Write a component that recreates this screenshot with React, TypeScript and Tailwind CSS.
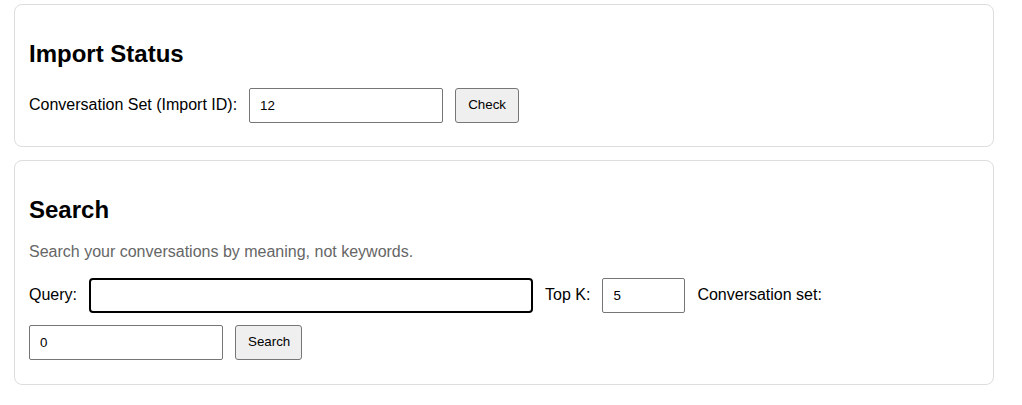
import { useState } from "react";

const font = { fontFamily: '"Liberation Sans", Arial, sans-serif' };

function Card({ children, className = "" }: { children: React.ReactNode; className?: string }) {
  return (
    <section className={`border border-[#dddddd] rounded-[8px] bg-white px-[14px] pt-[15px] ${className}`}>
      {children}
    </section>
  );
}

export default function App() {
  const [importId, setImportId] = useState("12");
  const [query, setQuery] = useState("");
  const [topK, setTopK] = useState("5");
  const [convSet, setConvSet] = useState("0");

  const inputCls =
    "h-[35px] px-[10px] text-[13.33px] text-black bg-white border border-[#767676] rounded-[2px] outline-none";
  const btnCls =
    "h-[35px] px-[12px] text-[13.33px] text-black bg-[#efefef] border border-[#767676] rounded-[3px]";

  return (
    <div className="min-h-screen bg-white text-black pt-[4px] pl-[14px]" style={font}>
      <div className="w-[980px] flex flex-col gap-[13px]">
        <Card className="pb-[23px]">
          <h2 className="text-[24px] font-bold leading-[27.6px] my-[20px]">Import Status</h2>
          <div className="flex flex-wrap items-center gap-3 text-[16px]">
            <label>Conversation Set (Import ID):</label>
            <input
              className={`${inputCls} w-[194px]`}
              value={importId}
              onChange={(e) => setImportId(e.target.value)}
            />
            <button className={`${btnCls} w-[64px]`}>Check</button>
          </div>
        </Card>

        <Card className="pb-[24px]">
          <h2 className="text-[24px] font-bold leading-[27.6px] mt-[20px] mb-[20px]">Search</h2>
          <p className="text-[16px] leading-[18.4px] text-[#666666] mb-[16px]">
            Search your conversations by meaning, not keywords.
          </p>
          <div className="flex flex-wrap items-center gap-3 text-[16px]">
            <label>Query:</label>
            <input
              className="h-[35px] w-[444px] px-[10px] text-[13.33px] bg-white border-2 border-black rounded-[4px] outline-none"
              value={query}
              onChange={(e) => setQuery(e.target.value)}
            />
            <label>Top K:</label>
            <input
              className={`${inputCls} w-[83px]`}
              value={topK}
              onChange={(e) => setTopK(e.target.value)}
            />
            <label>Conversation set:</label>
            <input
              className={`${inputCls} w-[194px]`}
              value={convSet}
              onChange={(e) => setConvSet(e.target.value)}
            />
            <button className={`${btnCls} w-[67px]`}>Search</button>
          </div>
        </Card>
      </div>
    </div>
  );
}
